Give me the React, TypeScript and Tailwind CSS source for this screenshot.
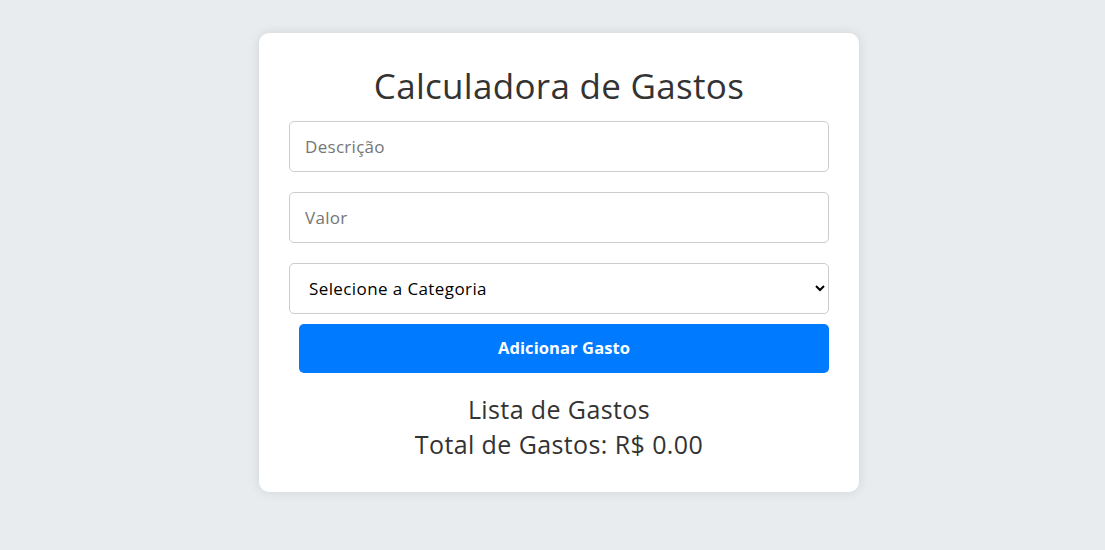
export default function App() {
  return (
    <div
      className="min-h-[550px] w-full bg-[#e9ecef] flex justify-center pl-[13px] pt-[33px]"
      style={{ fontFamily: '"Open Sans", "Noto Sans", sans-serif' }}
    >
      <div className="w-[600px] h-[459px] bg-white rounded-[10px] shadow-[0_0_12px_rgba(0,0,0,0.1)] px-[30px] pt-[30px]">
        <h1 className="text-[35px] tracking-[0.3px] leading-[46px] text-[#333] text-center mb-[12px]">
          Calculadora de Gastos
        </h1>

        <input
          type="text"
          placeholder="Descrição"
          className="block w-full h-[51px] border border-[#ccc] rounded-[5px] px-[15px] text-[17px] tracking-[0.3px] placeholder:text-[#757575] outline-none"
        />
        <input
          type="number"
          placeholder="Valor"
          className="block w-full h-[51px] mt-[20px] border border-[#ccc] rounded-[5px] px-[15px] text-[17px] tracking-[0.3px] placeholder:text-[#757575] outline-none"
        />
        <select
          defaultValue=""
          className="block w-full h-[51px] mt-[20px] border border-[#ccc] rounded-[5px] pl-[15px] pr-[4px] text-[17px] tracking-[0.4px] text-black bg-white outline-none"
        >
          <option value="">Selecione a Categoria</option>
          <option value="alimentacao">Alimentação</option>
          <option value="transporte">Transporte</option>
          <option value="lazer">Lazer</option>
        </select>

        <div className="pl-[10px] mt-[10px]">
          <button className="w-full h-[49px] bg-[#007bff] rounded-[5px] text-white font-bold text-[16.5px] tracking-[0.1px]">
            Adicionar Gasto
          </button>
        </div>

        <h2 className="mt-[19px] text-[25px] tracking-[0.4px] leading-[35px] text-[#333] text-center">
          Lista de Gastos
        </h2>
        <h2 className="text-[25px] tracking-[0.4px] leading-[34px] text-[#333] text-center">
          Total de Gastos: R$ 0.00
        </h2>
      </div>
    </div>
  );
}
